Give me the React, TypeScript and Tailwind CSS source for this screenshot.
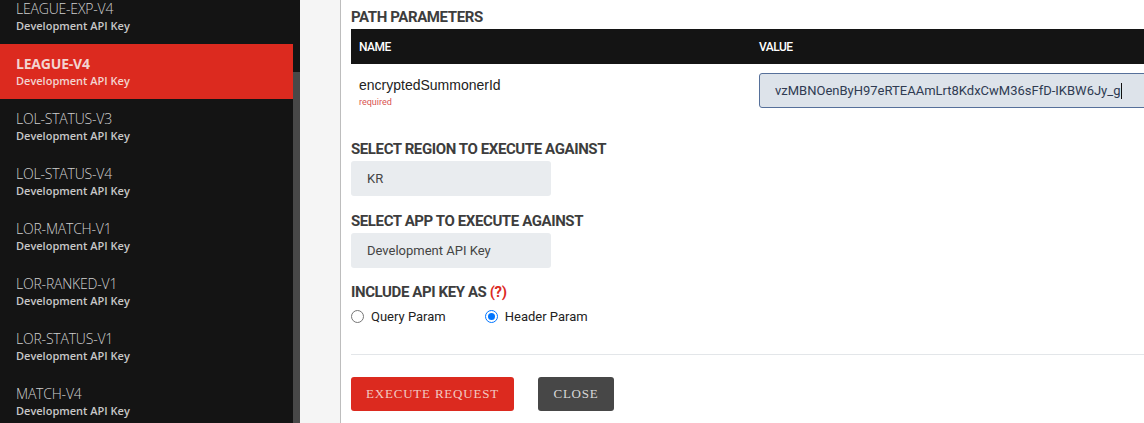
const apis = [
  "LEAGUE-EXP-V4",
  "LEAGUE-V4",
  "LOL-STATUS-V3",
  "LOL-STATUS-V4",
  "LOR-MATCH-V1",
  "LOR-RANKED-V1",
  "LOR-STATUS-V1",
  "MATCH-V4",
];

const Sidebar = () => {
  return (
    <aside className="flex h-full w-[341px] shrink-0 border-r border-[#bdbdbd] bg-[#f5f5f5]">
      <div className="h-full w-[293px] overflow-hidden bg-[#141414]">
        <ul className="mt-[-11px]" style={{ fontFamily: '"Open Sans", sans-serif' }}>
          {apis.map((name) => {
            const active = name === "LEAGUE-V4";
            return (
              <li
                key={name}
                className={`flex h-[55px] flex-col justify-center px-4 ${
                  active ? "bg-[#dc2a1f]" : ""
                }`}
              >
                <span
                  className={`text-[14px] leading-[18px] tracking-[-0.2px] ${
                    active ? "font-bold text-[#f3d4d0]" : "font-light text-[#d0d0d0]"
                  }`}
                >
                  {name}
                </span>
                <span
                  className={`text-[11px] font-semibold leading-[15px] ${
                    active ? "text-[#f3d4d0]" : "text-[#c8c8c8]"
                  }`}
                >
                  Development API Key
                </span>
              </li>
            );
          })}
        </ul>
      </div>
      {/* scrollbar */}
      <div className="flex h-full w-[7px] flex-col bg-[#141414]">
        <div className="mt-[72px] flex-1 bg-[#484848]"></div>
      </div>
    </aside>
  );
};

const Heading = ({ children }: { children: React.ReactNode }) => (
  <h3 className="text-[15px] font-bold uppercase leading-[18px] tracking-[-0.4px] text-[#3d3d3d]">
    {children}
  </h3>
);

const App = () => {
  return (
    <div
      className="flex h-[423px] w-[1144px] overflow-hidden bg-white"
      style={{ fontFamily: "Roboto, sans-serif" }}
    >
      <Sidebar />

      <main className="min-w-0 flex-1 overflow-hidden bg-white pl-[10px] pt-[8px]">
        <div className="w-[860px]">
          <Heading>Path Parameters</Heading>

          {/* Table */}
          <div className="mt-[3px]">
            <div className="flex h-[35px] items-center bg-[#141414] text-[12px] font-medium tracking-[-0.5px] text-white">
              <div className="w-[400px] px-2">NAME</div>
              <div className="flex-1 px-2">VALUE</div>
            </div>
            <div className="flex pt-[9px]">
              <div className="w-[400px] px-2 pt-[3px]">
                <div
                  className="text-[14px] leading-[18px] text-[#222]"
                  style={{ fontFamily: '"Liberation Sans", Arial, sans-serif' }}
                >
                  encryptedSummonerId
                </div>
                <div className="mt-[3px] text-[9px] leading-[10px] text-[#d9534f]">required</div>
              </div>
              <div className="flex-1 px-2">
                <div className="flex h-[35px] items-center rounded-[3px] border border-[#56709a] bg-[#dde3ea] pl-[15px] text-[13px] text-[#2f3b52]">
                  vzMBNOenByH97eRTEAAmLrt8KdxCwM36sFfD-IKBW6Jy_g
                  <span className="ml-px inline-block h-[16px] w-px bg-[#111]"></span>
                </div>
              </div>
            </div>
          </div>

          <div className="mt-[32px]">
            <Heading>Select Region to Execute Against</Heading>
            <div className="mt-[3px] flex h-[35px] w-[200px] items-center rounded-[3px] bg-[#e9ecef] px-4 text-[13px] text-[#444]">
              KR
            </div>
          </div>

          <div className="mt-[16px]">
            <Heading>Select App to Execute Against</Heading>
            <div className="mt-[3px] flex h-[35px] w-[200px] items-center rounded-[3px] bg-[#e9ecef] px-4 text-[13px] text-[#444]">
              Development API Key
            </div>
          </div>

          <div className="mt-[15px]">
            <Heading>
              Include API Key as <span className="text-[#dc2a1f]">(?)</span>
            </Heading>
            <div className="mt-[6px] flex items-center text-[13px] text-[#222]">
              <label className="flex items-center">
                <span className="inline-block h-[13px] w-[13px] rounded-full border border-[#767676] bg-white"></span>
                <span className="ml-[7px]">Query Param</span>
              </label>
              <label className="ml-[39px] flex items-center">
                <span className="flex h-[13px] w-[13px] items-center justify-center rounded-full border border-[#0075ff] bg-white">
                  <span className="h-[7px] w-[7px] rounded-full bg-[#0075ff]"></span>
                </span>
                <span className="ml-[7px]">Header Param</span>
              </label>
            </div>
          </div>

          <hr className="mt-[27px] border-t border-[#e3e6e9]" />

          <div
            className="mt-[22px] flex gap-[24px]"
            style={{ fontFamily: '"Liberation Serif", serif' }}
          >
            <button className="h-[34px] w-[163px] rounded-[3px] bg-[#dc2a1f] text-[13px] uppercase tracking-[0.8px] text-[#f2c9c2]">
              Execute Request
            </button>
            <button className="h-[34px] w-[76px] rounded-[3px] bg-[#474747] text-[13px] uppercase tracking-[0.8px] text-[#d8d8d8]">
              Close
            </button>
          </div>
        </div>
      </main>
    </div>
  );
};

export default App;
